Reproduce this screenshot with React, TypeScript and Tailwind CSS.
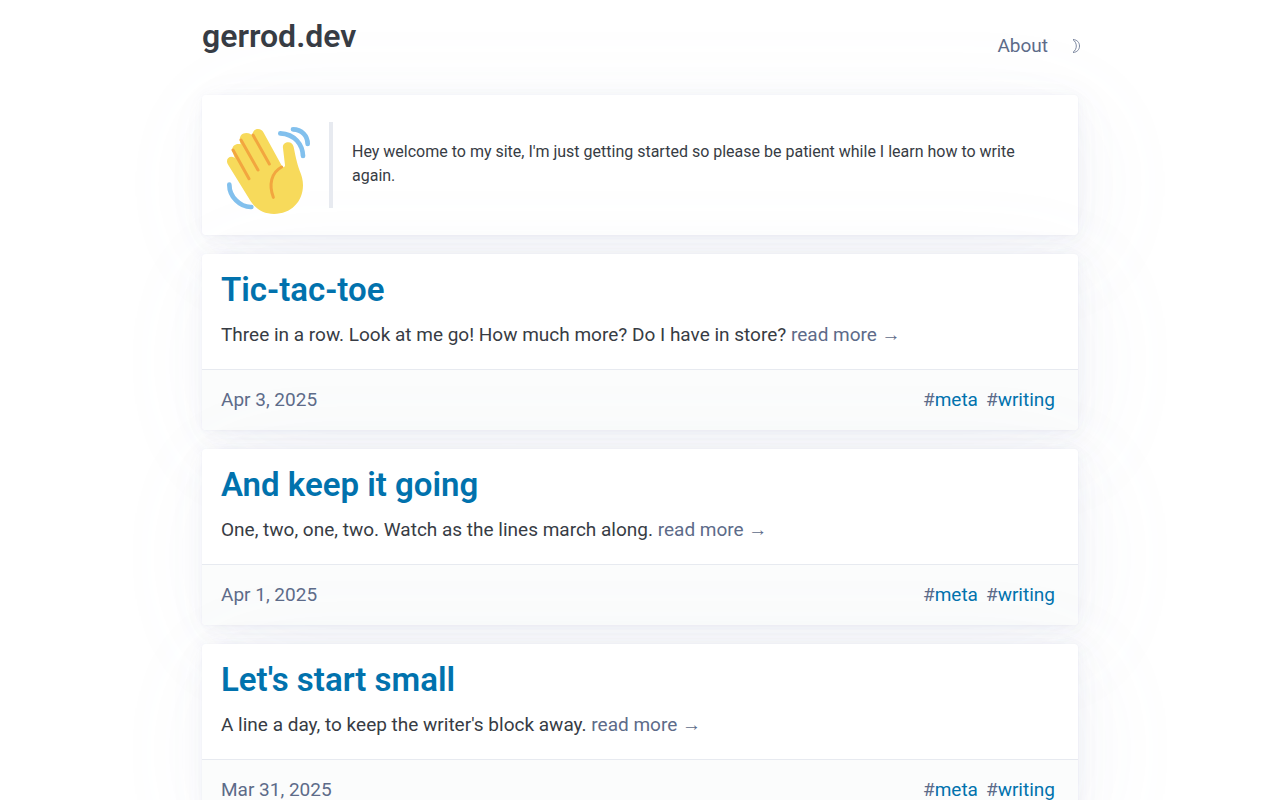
const posts = [
  {
    title: "Tic-tac-toe",
    summary: "Three in a row. Look at me go! How much more? Do I have in store?",
    date: "Apr 3, 2025",
    tags: ["meta", "writing"],
  },
  {
    title: "And keep it going",
    summary: "One, two, one, two. Watch as the lines march along.",
    date: "Apr 1, 2025",
    tags: ["meta", "writing"],
  },
  {
    title: "Let's start small",
    summary: "A line a day, to keep the writer's block away.",
    date: "Mar 31, 2025",
    tags: ["meta", "writing"],
  },
];

const card =
  "mb-[19px] rounded bg-white shadow-[0_1px_3px_rgba(129,145,181,0.017),1px_1px_8px_rgba(129,145,181,0.024),1px_2px_14px_rgba(129,145,181,0.03),2px_4px_26px_rgba(129,145,181,0.036),4px_8px_48px_rgba(129,145,181,0.043),10px_19px_114px_rgba(129,145,181,0.06),0_0_0_1px_rgba(129,145,181,0.015)]";

function WavingHand() {
  return (
    <svg viewBox="75 105 261 270" className="h-[90px] w-[87px] shrink-0" fill="none" strokeLinecap="round" aria-hidden="true">
      <path
        fill="#f7da5b"
        d="M152 334 L83 222 C75 205 92 195 104 204 L98 185 C93 169 107 158 122 163 C115 144 122 129 139 129 C148 129 153 133 157 137 C157 126 163 117 174 117 C182 117 187 121 191 128 L247 230 C251 233 255 231 255 226 L249 175 C247 164 255 157 265 157 C273 157 279 162 281 171 C285 190 290 218 299 242 C305 257 309 269 309 286 C309 336 272 372 222 372 C191 372 167 357 152 334 Z"
      />
      <path stroke="#f2a63f" strokeWidth="9" d="M99 180 L147 266 M123 150 L174 240 M159 135 L208 222" />
      <path stroke="#f2a63f" strokeWidth="9" d="M245 231 C213 248 206 285 220 322" />
      <path stroke="#82c0ed" strokeWidth="14" d="M88 284 C88 320 120 352 154 351 M241 130 C285 132 308 165 309 198 M279 118 C305 118 323 138 323 162" />
    </svg>
  );
}

function Moon() {
  return (
    <svg viewBox="0 0 8 14" className="h-3.5 w-2" fill="none" stroke="currentColor" strokeWidth="0.8" strokeLinejoin="round" aria-hidden="true">
      <path d="M1 0.6 C5 0.6 7.5 3.4 7.5 7 C7.5 10.6 5 13.4 1 13.4 C3.2 11.6 4.3 9.5 4.3 7 C4.3 4.5 3.2 2.4 1 0.6 Z" />
    </svg>
  );
}

export default function App() {
  return (
    <div className="min-h-screen bg-white font-[Roboto,'Liberation_Sans',sans-serif] text-[19px] leading-7 text-[#373c44]">
      <div className="mx-auto max-w-[876px]">
        {/* Header */}
        <header className="mb-5 flex h-[75px] items-center justify-between">
          <h1 className="pb-1 text-[32px] leading-10 font-semibold">gerrod.dev</h1>
          <nav className="-mr-0.5 flex items-center gap-6 pt-4 text-[#5d6b89]">
            <a href="#about">About</a>
            <button type="button" aria-label="Toggle theme">
              <Moon />
            </button>
          </nav>
        </header>

        <main>
          {/* Welcome */}
          <section className={card}>
            <div className="flex min-h-[140px] items-center px-[19px]">
              <div className="flex w-[108px] shrink-0 justify-center pt-2.5 pr-3.5">
                <WavingHand />
              </div>
              <blockquote className="flex min-h-[86px] items-center border-l-4 border-[#e7eaf0] pr-10 pb-0.5 pl-[19px] text-base leading-6">
                Hey welcome to my site, I'm just getting started so please be patient while I learn how to write again.
              </blockquote>
            </div>
          </section>

          {/* Posts */}
          {posts.map((post) => (
            <article key={post.title} className={card}>
              <div className="px-[19px] pt-4 pb-[18px]">
                <h2 className="mb-2 text-[33px] leading-10 font-semibold text-[#0172ad]">
                  <a href="#post">{post.title}</a>
                </h2>
                <p className="leading-[33px]">
                  {post.summary}{" "}
                  <a href="#post" className="text-[#5d6b89]">read more →</a>
                </p>
              </div>
              <footer className="flex items-center justify-between rounded-b border-t border-[#e7eaf0] bg-[#fbfcfc] py-4 pr-[23px] pl-[19px] text-[#5d6b89]">
                <time>{post.date}</time>
                <div className="flex gap-2">
                  {post.tags.map((tag) => (
                    <span key={tag}>
                      #<a href="#tag" className="text-[#0172ad]">{tag}</a>
                    </span>
                  ))}
                </div>
              </footer>
            </article>
          ))}
        </main>
      </div>
    </div>
  );
}
